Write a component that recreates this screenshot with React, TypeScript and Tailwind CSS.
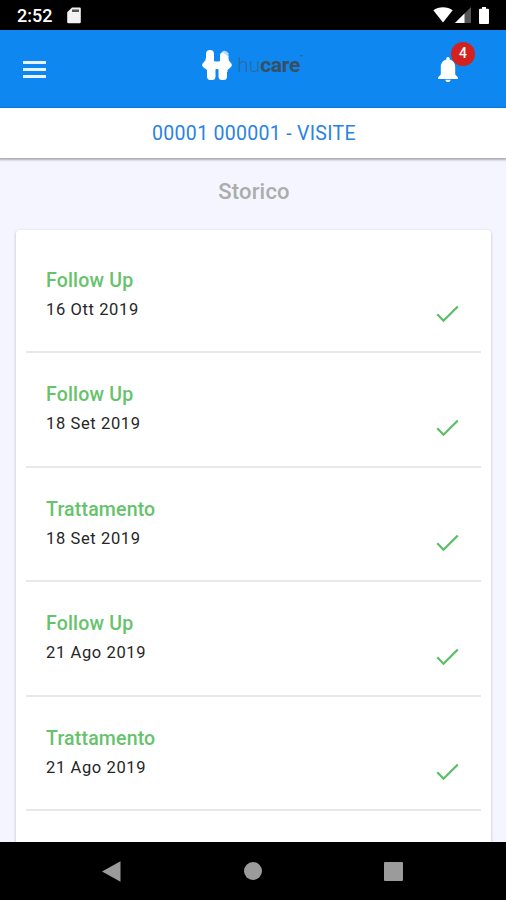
interface Visit {
  id: number;
  type: string;
  date: string;
}

const VISITS: Visit[] = [
  { id: 1, type: 'Follow Up', date: '16 Ott 2019' },
  { id: 2, type: 'Follow Up', date: '18 Set 2019' },
  { id: 3, type: 'Trattamento', date: '18 Set 2019' },
  { id: 4, type: 'Follow Up', date: '21 Ago 2019' },
  { id: 5, type: 'Trattamento', date: '21 Ago 2019' }
];

function StatusBar() {
  return (
    <div className="h-[30px] shrink-0 bg-black text-white flex items-center pl-[17px] pr-[17px]">
      <span className="text-[18px] leading-none font-medium w-[36px] mt-[2px]">2:52</span>
      <svg className="ml-[14px] mt-[1px] w-[14px] h-[17px]" viewBox="0 0 14 17" fill="#f2f2f2">
        <path d="M5 .5h7.500a1.300 1.300 0 0 1 1.300 1.300v13.200a1.300 1.300 0 0 1-1.300 1.300h-11a1.300 1.300 0 0 1-1.300-1.300V5.300z" />
        <path d="M5 2.500h7v2.500H5z" fill="#555" />
      </svg>
      <svg className="ml-auto w-[20px] h-[16px]" viewBox="0 0 20 16" fill="#fff">
        <path d="M10 15.500L.3 3.200C3 1.200 6.300.2 10 .2s7 1 9.700 3z" />
      </svg>
      <svg className="ml-[2px] w-[16px] h-[16px]" viewBox="0 0 16 16">
        <path d="M0 16L16 0v16z" fill="#555" />
        <path d="M0 16L9.500 6.500V16z" fill="#fff" />
      </svg>
      <svg className="ml-[8px] w-[10px] h-[17px]" viewBox="0 0 10 17" fill="#fff">
        <path d="M3 0h4v1.800h2a1 1 0 0 1 1 1V16a1 1 0 0 1-1 1H1a1 1 0 0 1-1-1V2.800a1 1 0 0 1 1-1h2z" />
      </svg>
    </div>
  );
}

function Logo() {
  return (
    <div className="flex items-center mb-[8px] ml-[7px]">
      <svg className="w-[30px] h-[30px]" viewBox="0 0 30 30" fill="#fff">
        <rect x="4" y="0" width="8" height="14" rx="4" />
        <rect x="5" y="15" width="8.500" height="15" rx="3.500" />
        <rect x="16.500" y="15" width="8.500" height="15" rx="3.500" />
        <path d="M18 6Q18 2 21.500 2L26.500 6V14H18z" />
        <path d="M3.500 8.500h8.500v2.500q3 1 6 0V8.500h8.500v1.800l2.500 2.700q1.700 2 0 4l-3.500 3v2h-7.500v-2.500q-3-1-6 0V22h-7v-2L1 17q-1.700-2 0-4l2.500-2.700z" />
        <path d="M20 1.200q4.500-1.500 6.500 2.300V7z" fill="#b9d9fa" />
      </svg>
      <div className="ml-[5px] flex items-start text-[21px] leading-[24px] text-[#36505f]">
        <span className="font-light text-[#2c6c9e] w-[23px]">hu</span>
        <span className="font-bold tracking-[-0.300px]">care</span>
        <span className="text-[6px] leading-[7px]">™</span>
      </div>
    </div>
  );
}

function Header() {
  return (
    <header className="h-[78px] shrink-0 bg-[#0f87f0] flex items-center justify-between pl-[23px] pr-[31px]">
      <button className="w-[38px] h-[17px] flex flex-col justify-between">
        <span className="block w-[23px] h-[3px] bg-[#e7f3fe]" />
        <span className="block w-[23px] h-[3px] bg-[#e7f3fe]" />
        <span className="block w-[23px] h-[3px] bg-[#e7f3fe]" />
      </button>
      <Logo />
      <button className="relative w-[37px] h-[24px] -mt-px">
        <svg className="w-[20px] h-[25px]" viewBox="0 0 20 25" fill="#fff">
          <path d="M10 0c1 0 1.700.8 1.700 1.800v.8c3.500.9 5.500 3.800 5.500 7.400v7.500L20 20.500V22H0v-1.500l2.800-3V10c0-3.600 2-6.500 5.500-7.400v-.8C8.300.8 9 0 10 0zM7.500 22.700h5c0 1.400-1 2.300-2.500 2.300s-2.500-.9-2.500-2.300z" />
        </svg>
        <span className="absolute left-[13px] -top-[15px] size-[24px] rounded-full bg-[#d3211f] text-white text-[14px] font-medium flex items-center justify-center">
          4
        </span>
      </button>
    </header>
  );
}

function VisitRow({ visit }: { visit: Visit }) {
  return (
    <li className="h-[114.400px] shrink-0 mx-[10px] pl-5 pr-[22px] pt-[29px] border-b-2 border-[#e8e8e8] flex justify-between">
      <div>
        <h3 className="text-[19.500px] leading-[26px] font-medium tracking-[0.180px] text-[#66c36b]">{visit.type}</h3>
        <p className="mt-[4px] text-[16.500px] leading-[24px] tracking-[0.620px] text-[#262626]">{visit.date}</p>
      </div>
      <svg className="mt-[37px] w-[23px] h-[18px]" viewBox="0 0 23 18" fill="none" stroke="#5cbd65" strokeWidth="2.200">
        <path d="M1.300 9.300l6.200 6.500L21.800 1.500" />
      </svg>
    </li>
  );
}

function NavBar() {
  return (
    <nav className="h-[58px] shrink-0 bg-black flex items-center justify-between pl-[102px] pr-[103px]">
      <svg className="w-[19px] h-[21px]" viewBox="0 0 19 21" fill="#9b9b9b">
        <path d="M0 10.500L18.500.3v20.400z" />
      </svg>
      <span className="size-[18px] rounded-full bg-[#9b9b9b]" />
      <span className="size-[19px] rounded-[1px] bg-[#9b9b9b]" />
    </nav>
  );
}

export default function App() {
  return (
    <div className="w-full h-[900px] overflow-hidden flex flex-col bg-[#f4f5fe] font-[Roboto,sans-serif]">
      <StatusBar />
      <Header />
      <div className="h-[50px] shrink-0 bg-white shadow-[0_1px_2px_1px_rgba(0,0,0,0.3)] flex items-center justify-center">
        <h1 className="pl-[2px] pt-px text-[19.500px] leading-none tracking-[0.300px] text-[#2a82e4]">00001 000001 - VISITE</h1>
      </div>

      <main className="flex-1 min-h-0 overflow-hidden flex flex-col">
        <h2 className="h-[72px] shrink-0 pt-[21px] pl-[2px] text-center text-[22px] leading-[26px] font-medium tracking-[0.200px] text-[#acacac]">
          Storico
        </h2>
        <ul className="flex-1 mx-4 mr-[15px] pt-[9px] rounded-t-[4px] bg-white shadow-[0_1px_3px_rgba(0,0,0,0.25)] flex flex-col">
          {VISITS.map((visit) => (
            <VisitRow key={visit.id} visit={visit} />
          ))}
        </ul>
      </main>

      <NavBar />
    </div>
  );
}
